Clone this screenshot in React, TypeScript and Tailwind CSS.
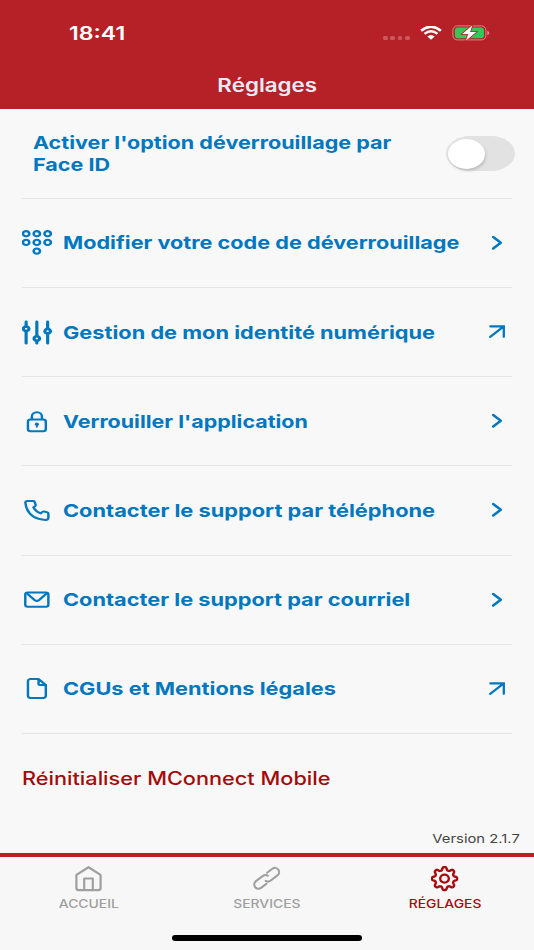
import type { ReactNode } from 'react'
import clsx from 'clsx'

const BLUE = '#0077be'

// Widened text: the line box stays as it is, the glyphs scale from the given origin
const Wide = ({ className, children }: { className?: string; children: ReactNode }) => (
  <span className={clsx('inline-block whitespace-nowrap', className)}>{children}</span>
)

const RowIcon = ({ children }: { children: ReactNode }) => (
  <svg
    viewBox="0 0 25 25"
    preserveAspectRatio="none"
    className="w-[30.4px] h-[25px] shrink-0"
    fill="none"
    stroke={BLUE}
    strokeWidth="2"
    strokeLinecap="round"
    strokeLinejoin="round"
  >
    {children}
  </svg>
)

const KeypadIcon = () => (
  <RowIcon>
    {[[3.4, 3.7], [12.2, 3.7], [21.1, 3.7], [3.4, 12.4], [12.2, 12.4], [21.1, 12.4], [12.2, 21.1]].map(([x, y]) => (
      <circle key={`${x}-${y}`} cx={x} cy={y} r="2.6" strokeWidth="2.1" />
    ))}
  </RowIcon>
)

const SlidersIcon = () => (
  <RowIcon>
    <g strokeWidth="2.6">
      <path d="M3.4 1.9v4.5M3.4 11v12.3M12.2 1.9v14M12.2 21v2.3M21.1 1.9v6.7M21.1 13.6v9.7" />
      <circle cx="3.4" cy="8.8" r="2.3" />
      <circle cx="12.2" cy="18.5" r="2.3" />
      <circle cx="21.1" cy="11.2" r="2.3" />
    </g>
  </RowIcon>
)

const LockIcon = () => (
  <RowIcon>
    <rect x="4.9" y="10.5" width="14.7" height="11.8" rx="2.2" />
    <path d="M8.1 10.3V7.5a4.15 4.15 0 0 1 8.3 0v2.8" />
    <circle cx="12.25" cy="15.2" r="1.7" fill={BLUE} stroke="none" />
    <path d="M12.25 15.4v2.6" strokeWidth="1.5" />
  </RowIcon>
)

const PhoneIcon = () => (
  <RowIcon>
    <path d="M4.6 2.9H9.1q.9 0 1.2.8l.9 3q.2.9-.5 1.500l-1.300 1q1.600 4.200 6.100 6.200l1.300-1.500q.6-.6 1.500-.4l2.600.9q.8.3.8 1.200V19.800q0 2.100-2.200 2.100Q4.500 21 2.800 4.800 2.700 2.900 4.600 2.900Z" />
  </RowIcon>
)

const MailIcon = () => (
  <RowIcon>
    <rect x="2.7" y="5.5" width="19" height="14.2" rx="2" />
    <path d="M3.7 6l6.6 7q1.9 1.8 3.8 0l6.6-7" />
  </RowIcon>
)

const FileIcon = () => (
  <RowIcon>
    <path d="M13.6 3H7A2.1 2.1 0 0 0 4.9 5.1v14.7A2.1 2.1 0 0 0 7 21.9h10.5a2.1 2.1 0 0 0 2.1-2.1V9L13.6 3v4.900A1.100 1.100 0 0 0 14.700 9h4.900" />
  </RowIcon>
)

const Chevron = () => (
  <svg viewBox="0 0 18 18" className="mr-[6px] size-[18px] shrink-0" fill="none" stroke={BLUE} strokeWidth="2.5" strokeLinecap="round" strokeLinejoin="round">
    <path d="M5.2 3L12.8 8.8l-7.6 5.8" />
  </svg>
)

const ArrowOut = () => (
  <svg viewBox="0 0 20 18" className="mr-[5px] h-[18px] w-5 shrink-0" fill="none" stroke={BLUE} strokeWidth="2.3" strokeLinecap="round">
    <path d="M3.2 13.8L16.4 3.6M3.4 3.4h13.4v10.4" />
  </svg>
)

const rows = [
  { label: 'Modifier votre code de déverrouillage', icon: KeypadIcon, end: Chevron, wide: 'scale-x-[1.203]' },
  { label: 'Gestion de mon identité numérique', icon: SlidersIcon, end: ArrowOut, wide: 'scale-x-[1.209]' },
  { label: "Verrouiller l'application", icon: LockIcon, end: Chevron, wide: 'scale-x-[1.192]' },
  { label: 'Contacter le support par téléphone', icon: PhoneIcon, end: Chevron, wide: 'scale-x-[1.211]' },
  { label: 'Contacter le support par courriel', icon: MailIcon, end: Chevron, wide: 'scale-x-[1.209]' },
  { label: 'CGUs et Mentions légales', icon: FileIcon, end: ArrowOut, wide: 'scale-x-[1.209]' },
]

// Eight rounded teeth around the centre of a 28x26 box
const gearPath =
  Array.from({ length: 144 }, (_, i) => {
    const a = (i / 144) * Math.PI * 2
    const wave = Math.tanh(1.6 * Math.cos(8 * a)) / Math.tanh(1.6)
    const x = 13.5 + (11.1 + 1.5 * wave) * Math.cos(a)
    const y = 12.6 + (10 + 1.5 * wave) * Math.sin(a)
    return `${i ? 'L' : 'M'}${x.toFixed(2)} ${y.toFixed(2)}`
  }).join('') + 'Z'

const tabs = [
  {
    label: 'ACCUEIL',
    active: false,
    icon: (
      <g strokeWidth="2.2">
        <path d="M1.4 8.9L13.5 1.2l12.1 7.7v13a2.3 2.3 0 0 1-2.3 2.2H3.7a2.3 2.3 0 0 1-2.3-2.2Z" />
        <path d="M9.2 23.9V12.5h8.6v11.4" />
      </g>
    ),
  },
  {
    label: 'SERVICES',
    active: false,
    icon: (
      <g transform="translate(13.7 12.3) rotate(-37)">
        <path d="M-3.6 4.2H-10.3a4.2 4.2 0 0 1 0-8.4H-1.5a4.2 4.2 0 0 1 3.9 2.8" />
        <path d="M3.6-4.2H10.3a4.2 4.2 0 0 1 0 8.4H1.5a4.2 4.2 0 0 1-3.9-2.8" />
      </g>
    ),
  },
  {
    label: 'RÉGLAGES',
    active: true,
    icon: (
      <>
        <path d={gearPath} strokeWidth="2.4" />
        <ellipse cx="13.5" cy="12.6" rx="4.3" ry="4" strokeWidth="2.4" />
      </>
    ),
  },
]

const StatusBar = () => (
  <div className="flex h-[66px] items-center justify-between pl-[69px] pr-[44px]">
    <Wide className="origin-left scale-x-[1.245] pt-px text-[18.5px] font-semibold text-white">18:41</Wide>
    <div className="flex items-center">
      <div className="mt-[9px] flex gap-[2.7px] pr-[10.5px]">
        {[0, 1, 2, 3].map((i) => (
          <span key={i} className="h-[4px] w-[4.6px] rounded-[1.5px] bg-white/25" />
        ))}
      </div>
      <svg viewBox="0 0 22 14" className="h-[14px] w-[22px]" fill="none" stroke="white">
        <path d="M1.1 4.8Q11-3.3 20.9 4.8" strokeWidth="2.6" />
        <path d="M4.5 7.9Q11 2.5 17.5 7.9" strokeWidth="2.4" />
        <path d="M7.3 10.4Q11 7.4 14.7 10.4L11 13.7Z" fill="white" stroke="none" />
      </svg>
      <svg viewBox="0 0 38 16" className="ml-[10px] h-4 w-[38px]">
        <rect x=".9" y=".9" width="33" height="14" rx="4.3" fill="none" stroke="white" strokeOpacity=".45" />
        <rect x="2.9" y="2.6" width="29" height="10.6" rx="2.7" fill="#34c759" />
        <path d="M35.3 5.7q2 .7 2 2.3t-2 2.3Z" fill="white" fillOpacity=".5" />
        <path d="M20.3.2L10.3 9h6l-2.5 6.8L24.3 7h-6.2Z" fill="white" stroke="#b52126" strokeWidth="1.6" paintOrder="stroke" />
      </svg>
    </div>
  </div>
)

const App = () => {
  return (
    <div className="flex h-[950px] w-[534px] flex-col overflow-hidden bg-[#f8f8f8] font-['Inter','Liberation_Sans',sans-serif]">
      <header className="h-[109px] bg-[#b52126]">
        <StatusBar />
        <h1 className="pt-[7px] text-center text-[18.5px] leading-[24px] font-semibold text-[#e5eaf8]">
          <Wide className="scale-x-[1.21]">Réglages</Wide>
        </h1>
      </header>

      <main className="flex-1 px-[22px]">
        {/* Face ID option */}
        <div className="flex h-[89.8px] justify-between border-b border-[#e4e4e4] pl-[11px]">
          <p className="pt-[23px] text-[18px] leading-[22px] font-bold text-[#0077be]">
            <Wide className="origin-left scale-x-[1.198]">
              Activer l'option déverrouillage par
              <br />
              Face ID
            </Wide>
          </p>
          <button
            role="switch"
            aria-checked="false"
            aria-label="Face ID"
            className="mt-[27px] -mr-[3px] h-[35px] w-[69.5px] rounded-[24px/17.5px] bg-[#e2e2e2] p-[2.5px]"
          >
            <span className="block h-[30px] w-[37px] rounded-[50%] bg-white shadow-[1px_2px_3px_rgba(0,0,0,0.16)]" />
          </button>
        </div>

        {rows.map(({ label, icon: Icon, end: End, wide }) => (
          <div key={label} className="flex h-[89.2px] items-center border-b border-[#e4e4e4]">
            <Icon />
            <div className="flex-1 pt-px pl-[10.6px] text-[18px] leading-[22px] font-bold text-[#0077be]">
              <Wide className={clsx('origin-left', wide)}>{label}</Wide>
            </div>
            <End />
          </div>
        ))}

        <div className="pt-[34px] text-[18px] leading-[22px] font-medium text-[#a30a0a]">
          <Wide className="origin-left scale-x-[1.205]">Réinitialiser MConnect Mobile</Wide>
        </div>
        <div className="-mr-[8px] pt-[41px] text-right text-[12px] leading-[16px] text-[#444]">
          <Wide className="origin-right scale-x-[1.235]">Version 2.1.7</Wide>
        </div>
      </main>

      <nav className="flex h-[97px] flex-col border-t-4 border-[#b52126] bg-[#f7f7f7]">
        <div className="grid grid-cols-3">
          {tabs.map((tab) => (
            <div
              key={tab.label}
              className={clsx('flex flex-col items-center pt-[8.5px]', tab.active ? 'text-[#a80a0e]' : 'text-[#9f9f9f]')}
            >
              <svg viewBox="0 0 28 26" className="h-[26px] w-7" fill="none" stroke="currentColor" strokeWidth="2.1" strokeLinecap="round" strokeLinejoin="round">
                {tab.icon}
              </svg>
              <Wide className="mt-[4px] scale-x-[1.21] text-[11.5px] leading-[16px] font-medium">{tab.label}</Wide>
            </div>
          ))}
        </div>
        <div className="mx-auto mt-auto mb-[9.5px] h-[5.5px] w-[190px] rounded-full bg-black" />
      </nav>
    </div>
  )
}

export default App
